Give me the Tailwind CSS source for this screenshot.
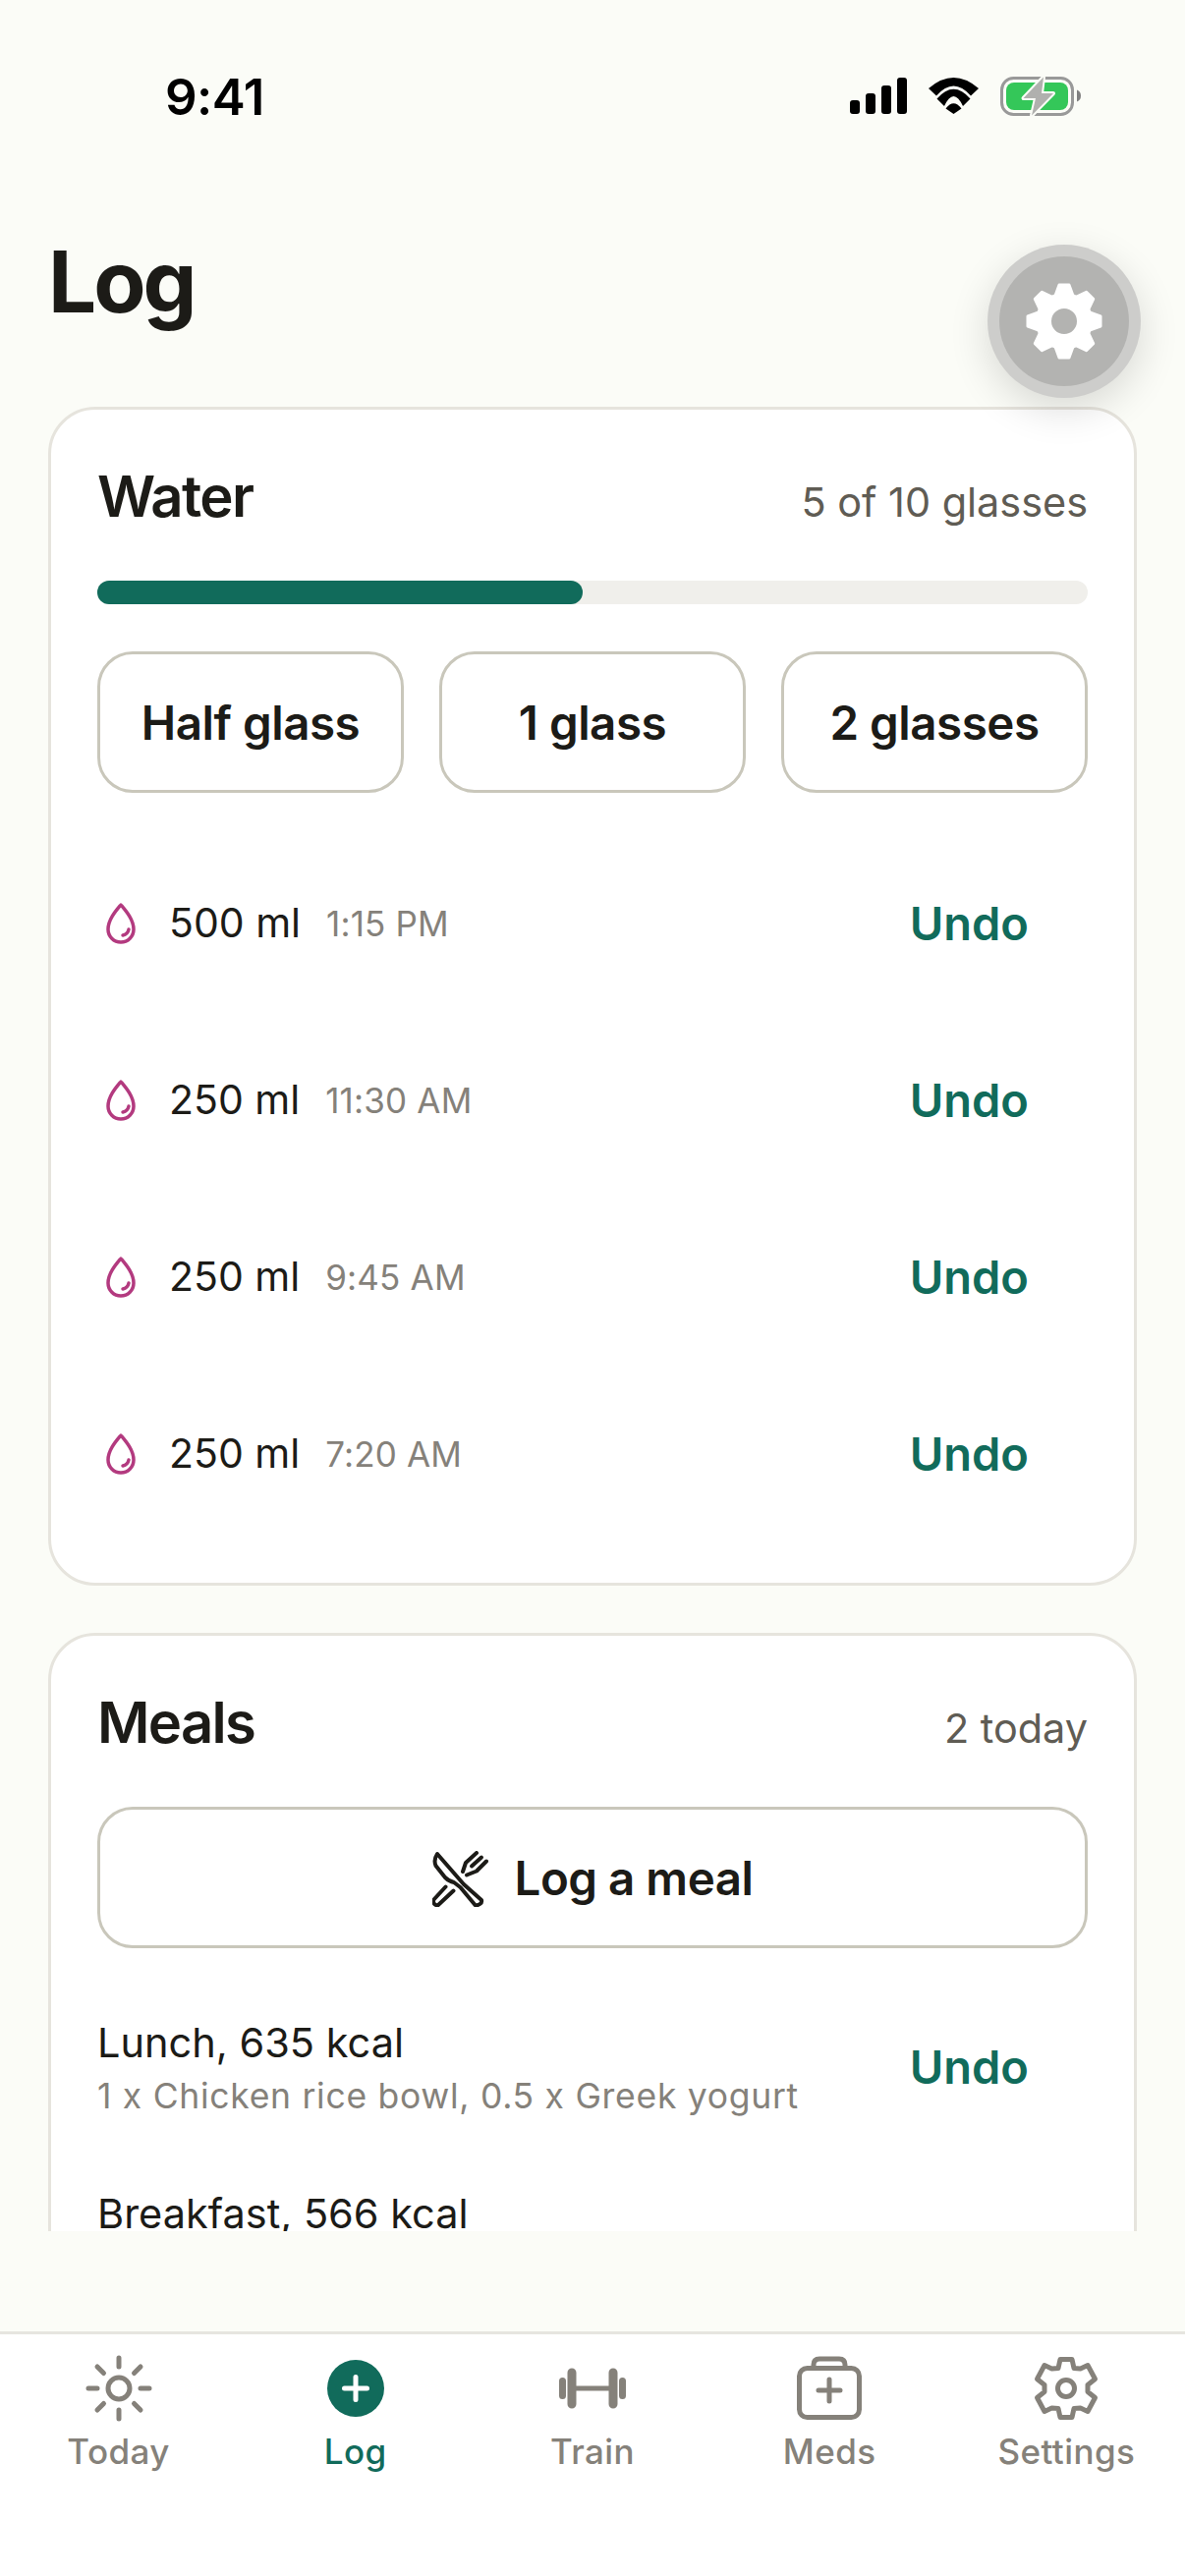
<!DOCTYPE html>
<html lang="en">

<head>
    <meta charset="UTF-8">
    <meta name="viewport" content="width=device-width, initial-scale=1.0">
    <title>Log</title>
    <script src="https://cdn.jsdelivr.net/npm/@tailwindcss/browser@4"></script>
</head>

<body class="bg-[#fbfcf7]">
    <div class="relative w-[1206px] h-[2622px] overflow-hidden flex flex-col bg-[#fbfcf7] text-[#1c1b17] font-[Inter,sans-serif]">

        <!-- status bar -->
        <div class="h-[196px] shrink-0 flex items-center">
            <span class="ml-[168px] w-[697px] text-[51px] leading-none font-semibold tracking-[-0.01em] text-black">9:41</span>
            <svg width="58" height="37" viewBox="0 0 58 37" class="mt-[-1px]">
                <rect x="0" y="23" width="10" height="14" rx="3" />
                <rect x="16" y="16" width="10" height="21" rx="3" />
                <rect x="32" y="8" width="10" height="29" rx="3" />
                <rect x="48" y="0" width="10" height="37" rx="3" />
            </svg>
            <svg width="51" height="37" viewBox="0 0 51 37" class="ml-[22px] mt-[-1px]">
                <path d="M0 11Q25.500-11 51 11L43 18.500Q25.500-1.500 8 18.500Z" />
                <path d="M8.500 21.500Q25.500 2 42.500 21.500L35 29Q25.500 9 16 29Z" />
                <path d="M17.500 31.500Q25.500 21 33.500 31.500L25.500 37Z" />
            </svg>
            <svg width="84" height="44" viewBox="0 0 84 44" class="ml-[22px] mt-[-1px]">
                <rect x="1.500" y="3.500" width="72" height="37" rx="12" fill="none" stroke="#999999" stroke-width="3" />
                <rect x="6" y="8" width="63" height="28" rx="8" fill="#34c759" />
                <path d="M78 15.500q4 1.500 4 6t-4 6z" fill="#808080" />
                <path d="M44 2.500L23.500 24H36L32 41.500L54 19H42Z" fill="#b0b0ae" stroke="#fbfcf7" stroke-width="4" stroke-linejoin="round" paint-order="stroke" />
            </svg>
        </div>

        <!-- title -->
        <div class="h-[218px] shrink-0 pl-[49px] pt-[41px]">
            <h1 class="text-[87px] leading-[100px] font-bold tracking-[-0.035em]">Log</h1>
        </div>

        <!-- floating settings button -->
        <div class="absolute z-10 left-[1005px] top-[249px] w-[156px] h-[156px] rounded-full bg-[#cdcdcb] shadow-[0_12px_40px_rgba(0,0,0,0.14)] flex items-center justify-center">
            <div class="w-[132px] h-[132px] rounded-full bg-[#b3b3b1] flex items-center justify-center">
                <svg width="80" height="80" viewBox="-40 -40 80 80" fill="#ffffff" stroke="#ffffff" stroke-width="3" stroke-linejoin="round">
                    <circle r="21" fill="none" stroke-width="16" />
                    <path d="M-9-26L-5-37H5L9-26Z" />
                    <path d="M-9-26L-5-37H5L9-26Z" transform="rotate(45)" />
                    <path d="M-9-26L-5-37H5L9-26Z" transform="rotate(90)" />
                    <path d="M-9-26L-5-37H5L9-26Z" transform="rotate(135)" />
                    <path d="M-9-26L-5-37H5L9-26Z" transform="rotate(180)" />
                    <path d="M-9-26L-5-37H5L9-26Z" transform="rotate(225)" />
                    <path d="M-9-26L-5-37H5L9-26Z" transform="rotate(270)" />
                    <path d="M-9-26L-5-37H5L9-26Z" transform="rotate(315)" />
                </svg>
            </div>
        </div>

        <!-- scroll area -->
        <main class="h-[1857px] shrink-0 overflow-hidden px-[49px] flex flex-col gap-[48px]">

            <section class="shrink-0 bg-white border-[3px] border-[#e6e4dd] rounded-[48px] px-[47px] pt-[52px] pb-[41px]">
                <div class="flex items-baseline justify-between">
                    <h2 class="text-[58px] leading-[72px] font-semibold tracking-[-0.028em]">Water</h2>
                    <span class="text-[41.4px] leading-[40px] text-[#5f5c54]">5 of 10 glasses</span>
                </div>
                <div class="mt-[50px] h-[24px] rounded-full bg-[#f0efeb]">
                    <div class="h-full w-[49%] rounded-full bg-[#116b5b]"></div>
                </div>
                <div class="mt-[48px] grid grid-cols-3 gap-[36px]">
                    <button class="h-[144px] pt-[2px] rounded-[36px] border-[3px] border-[#c9c7bb] text-[47.5px] font-semibold tracking-[-0.01em]">Half glass</button>
                    <button class="h-[144px] pt-[2px] rounded-[36px] border-[3px] border-[#c9c7bb] text-[47.5px] font-semibold tracking-[-0.01em]">1 glass</button>
                    <button class="h-[144px] pt-[2px] rounded-[36px] border-[3px] border-[#c9c7bb] text-[47.5px] font-semibold tracking-[-0.01em]">2 glasses</button>
                </div>
                <ul class="mt-[43px]">
                    <li class="h-[180px] flex items-center">
                        <svg width="30" height="42" viewBox="0 0 30 42" fill="none" stroke="#b33a7f" stroke-width="3.500" stroke-linecap="round" stroke-linejoin="round" class="ml-[9px]">
                            <path d="M15 2C20 8 28 17 28 27A13 13 0 0 1 2 27C2 17 10 8 15 2Z" />
                            <path d="M17 33Q22 32 23 27" />
                        </svg>
                        <span class="ml-[34px] text-[41px]">500 ml</span>
                        <span class="ml-[26px] text-[35px] text-[#85817a] tracking-[0.005em]">1:15 PM</span>
                        <span class="ml-auto mr-[60px] text-[47px] font-semibold text-[#116b5b]">Undo</span>
                    </li>
                    <li class="h-[180px] flex items-center">
                        <svg width="30" height="42" viewBox="0 0 30 42" fill="none" stroke="#b33a7f" stroke-width="3.500" stroke-linecap="round" stroke-linejoin="round" class="ml-[9px]">
                            <path d="M15 2C20 8 28 17 28 27A13 13 0 0 1 2 27C2 17 10 8 15 2Z" />
                            <path d="M17 33Q22 32 23 27" />
                        </svg>
                        <span class="ml-[34px] text-[41px]">250 ml</span>
                        <span class="ml-[26px] text-[35px] text-[#85817a] tracking-[0.005em]">11:30 AM</span>
                        <span class="ml-auto mr-[60px] text-[47px] font-semibold text-[#116b5b]">Undo</span>
                    </li>
                    <li class="h-[180px] flex items-center">
                        <svg width="30" height="42" viewBox="0 0 30 42" fill="none" stroke="#b33a7f" stroke-width="3.500" stroke-linecap="round" stroke-linejoin="round" class="ml-[9px]">
                            <path d="M15 2C20 8 28 17 28 27A13 13 0 0 1 2 27C2 17 10 8 15 2Z" />
                            <path d="M17 33Q22 32 23 27" />
                        </svg>
                        <span class="ml-[34px] text-[41px]">250 ml</span>
                        <span class="ml-[26px] text-[35px] text-[#85817a] tracking-[0.005em]">9:45 AM</span>
                        <span class="ml-auto mr-[60px] text-[47px] font-semibold text-[#116b5b]">Undo</span>
                    </li>
                    <li class="h-[180px] flex items-center">
                        <svg width="30" height="42" viewBox="0 0 30 42" fill="none" stroke="#b33a7f" stroke-width="3.500" stroke-linecap="round" stroke-linejoin="round" class="ml-[9px]">
                            <path d="M15 2C20 8 28 17 28 27A13 13 0 0 1 2 27C2 17 10 8 15 2Z" />
                            <path d="M17 33Q22 32 23 27" />
                        </svg>
                        <span class="ml-[34px] text-[41px]">250 ml</span>
                        <span class="ml-[26px] text-[35px] text-[#85817a] tracking-[0.005em]">7:20 AM</span>
                        <span class="ml-auto mr-[60px] text-[47px] font-semibold text-[#116b5b]">Undo</span>
                    </li>
                </ul>
            </section>

            <section class="shrink-0 bg-white border-[3px] border-[#e6e4dd] rounded-[48px] px-[47px] pt-[52px] pb-[60px]">
                <div class="flex items-baseline justify-between">
                    <h2 class="text-[58px] leading-[72px] font-semibold tracking-[-0.03em]">Meals</h2>
                    <span class="text-[41.4px] leading-[40px] text-[#5f5c54]">2 today</span>
                </div>
                <button class="mt-[50px] w-full h-[144px] pt-[2px] rounded-[36px] border-[3px] border-[#c9c7bb] flex items-center justify-center gap-[27px] text-[47.5px] font-semibold tracking-[-0.01em]">
                    <svg width="57" height="57" viewBox="0 0 57 57" fill="none" stroke="#1c1b17" stroke-width="4" stroke-linecap="round" stroke-linejoin="round">
                        <path d="M5 3L32 34L50 50C51 53 47 56 43.500 55L28.500 37L22 32Q17 31 13 27L3.500 15Q1 9 5 3Z" />
                        <path d="M13.500 36.500L1.500 49.500C0 53 3 56 6 55L21.500 40.500" />
                        <path d="M31 21L34 12L45 2" />
                        <path d="M50 6.500L40 15.500" />
                        <path d="M55 10.500L45 20.500L35 24.500" />
                    </svg>
                    <span>Log a meal</span>
                </button>
                <div class="mt-[69px] flex items-center">
                    <div>
                        <p class="text-[41.5px] leading-[55px]">Lunch, 635 kcal</p>
                        <p class="text-[35.5px] leading-[54px] text-[#85817a] tracking-[0.02em]">1 x Chicken rice bowl, 0.5 x Greek yogurt</p>
                    </div>
                    <span class="ml-auto mr-[60px] mb-[4px] text-[47px] font-semibold text-[#116b5b]">Undo</span>
                </div>
                <div class="mt-[65px]">
                    <p class="text-[41.5px] leading-[55px]">Breakfast, 566 kcal</p>
                </div>
            </section>
        </main>

        <div class="flex-1"></div>

        <!-- tab bar -->
        <nav class="h-[249px] shrink-0 bg-white border-t-[3px] border-[#e6e5df] pt-[19px] grid grid-cols-5 text-[35px] leading-[44px] font-[550] tracking-[0.012em] text-[#85817a]">
            <a class="flex flex-col items-center gap-[6px]">
                <svg width="72" height="72" viewBox="-36 -36 72 72" fill="none" stroke="#85817a" stroke-width="5" stroke-linecap="round">
                    <circle r="11" />
                    <path d="M0-31V-22M0 22V31M-31 0H-22M22 0H31M-22-22L-15.500-15.500M22-22L15.500-15.500M-22 22L-15.500 15.500M22 22L15.500 15.500" />
                </svg>
                <span>Today</span>
            </a>
            <a class="flex flex-col items-center gap-[6px] text-[#116b5b]">
                <svg width="72" height="72" viewBox="-36 -36 72 72" fill="none" stroke="#ffffff" stroke-width="5" stroke-linecap="round">
                    <circle r="29" fill="#116b5b" stroke="none" />
                    <path d="M0-11.500V11.500M-11.500 0H11.500" />
                </svg>
                <span>Log</span>
            </a>
            <a class="flex flex-col items-center gap-[6px]">
                <svg width="72" height="72" viewBox="-36 -36 72 72" fill="none" stroke="#85817a" stroke-linecap="round">
                    <path d="M-17 0H17" stroke-width="5" />
                    <path d="M-21-16V16M21-16V16" stroke-width="9" />
                    <path d="M-30.500-7.500V7.500M30.500-7.500V7.500" stroke-width="7" />
                </svg>
                <span>Train</span>
            </a>
            <a class="flex flex-col items-center gap-[6px]">
                <svg width="72" height="72" viewBox="-36 -36 72 72" fill="none" stroke="#85817a" stroke-width="5" stroke-linecap="round" stroke-linejoin="round">
                    <rect x="-30.500" y="-20.500" width="61" height="50" rx="8" />
                    <path d="M-16-20.500V-24Q-16-30-10-30H10Q16-30 16-24V-20.500" />
                    <path d="M0-9V13M-11 2H11" />
                </svg>
                <span>Meds</span>
            </a>
            <a class="flex flex-col items-center gap-[6px]">
                <svg width="72" height="72" viewBox="-36 -36 72 72" fill="none" stroke="#85817a" stroke-width="5" stroke-linejoin="round">
                    <path d="M-6-29.500H6L8-20.500L14.500-20L22-23.500L29.500-9.500L22-3.500V3.500L29.500 9.500L22 23.500L14.500 20L8 20.500L6 29.500H-6L-8 20.500L-14.500 20L-22 23.500L-29.500 9.500L-22 3.500V-3.500L-29.500-9.500L-22-23.500L-14.500-20L-8-20.500Z" />
                    <circle r="8.500" />
                </svg>
                <span>Settings</span>
            </a>
        </nav>
    </div>
</body>

</html>
